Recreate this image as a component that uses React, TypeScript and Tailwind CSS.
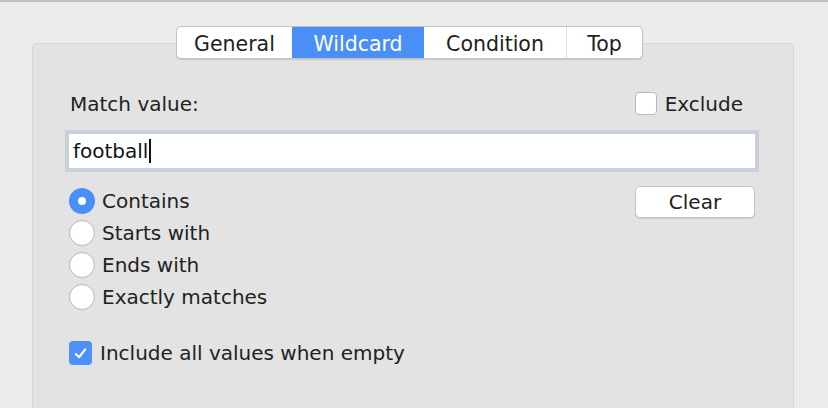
import React from "react";

const font = { fontFamily: '"DejaVu Sans", "Liberation Sans", sans-serif' };

function Radio({ checked, label }: { checked?: boolean; label: string }) {
  return (
    <div className="flex h-[32px] items-center gap-[7px]">
      {checked ? (
        <div className="flex h-[26px] w-[26px] items-center justify-center rounded-full bg-[#4a8ef7]">
          <div className="h-[8px] w-[8px] rounded-full bg-white" />
        </div>
      ) : (
        <div className="h-[26px] w-[26px] rounded-full border border-[#b5b5b5] bg-white" />
      )}
      <span className="text-[20px] leading-none text-[#222]">{label}</span>
    </div>
  );
}

export default function App() {
  const tabs = ["General", "Wildcard", "Condition", "Top"];
  const widths = ["w-[115px]", "w-[132px]", "w-[142px]", "w-[76px]"];
  return (
    <div
      style={font}
      className="flex h-[408px] w-[828px] flex-col overflow-hidden border-t-2 border-[#bfc3c9] bg-[#ececec]"
    >
      <div className="mt-[24px] flex justify-center pr-[9px]">
        <div className="relative z-10 flex h-[33px] overflow-hidden rounded-[5px] border border-[#c2c2c2] bg-white shadow-[0_1px_1px_rgba(0,0,0,0.12)]">
          {tabs.map((t, i) => (
            <div
              key={t}
              className={`flex items-center justify-center pt-[3px] text-[20.5px] ${widths[i]} ${
                i === 1
                  ? "bg-[#4a8ef7] text-white"
                  : "text-[#1e1e1e]"
              } ${i === 3 ? "border-l border-[#dcdcdc]" : ""}`}
            >
              {t}
            </div>
          ))}
        </div>
      </div>
      <div className="ml-[32px] mt-[-16px] flex w-[762px] flex-1 flex-col rounded-t-[5px] border border-b-0 border-[#d6d6d6] bg-[#e3e3e3] pl-[36px] pr-[38px] pt-[48px]">
        <div className="flex h-[23px] items-center justify-between">
          <span className="pl-[1px] text-[20px] text-[#222]">Match value:</span>
          <div className="flex items-center gap-[8px] pr-[12px]">
            <div className="h-[23px] w-[22px] rounded-[4px] border border-[#b9b9b9] bg-white" />
            <span className="text-[20px] text-[#222]">Exclude</span>
          </div>
        </div>
        <div className="mt-[19px] flex h-[34px] items-center bg-white pl-[4px] text-[20px] text-[#111] shadow-[0_0_0_4px_#c9d1dd]">
          <span>football</span>
          <span className="ml-[1px] h-[24px] w-[2px] bg-[#111]" />
        </div>
        <div className="mt-[17px] flex justify-between">
          <div className="flex flex-col">
            <Radio checked label="Contains" />
            <Radio label="Starts with" />
            <Radio label="Ends with" />
            <Radio label="Exactly matches" />
          </div>
          <div className="pt-[1px]">
            <div className="flex h-[32px] w-[120px] items-center justify-center rounded-[5px] border border-[#c4c4c4] bg-white text-[20px] text-[#222] shadow-[0_1px_1px_rgba(0,0,0,0.1)]">
              Clear
            </div>
          </div>
        </div>
        <div className="mt-[25px] flex items-center gap-[8px]">
          <div className="flex h-[24px] w-[23px] items-center justify-center rounded-[4px] bg-[#4d90f7]">
            <svg width="15" height="15" viewBox="0 0 16 16">
              <path d="M3 8.5 L6.5 12 L13 3.5" fill="none" stroke="white" strokeWidth="2.2" strokeLinecap="round" strokeLinejoin="round" />
            </svg>
          </div>
          <span className="text-[20px] text-[#222]">Include all values when empty</span>
        </div>
      </div>
    </div>
  );
}
